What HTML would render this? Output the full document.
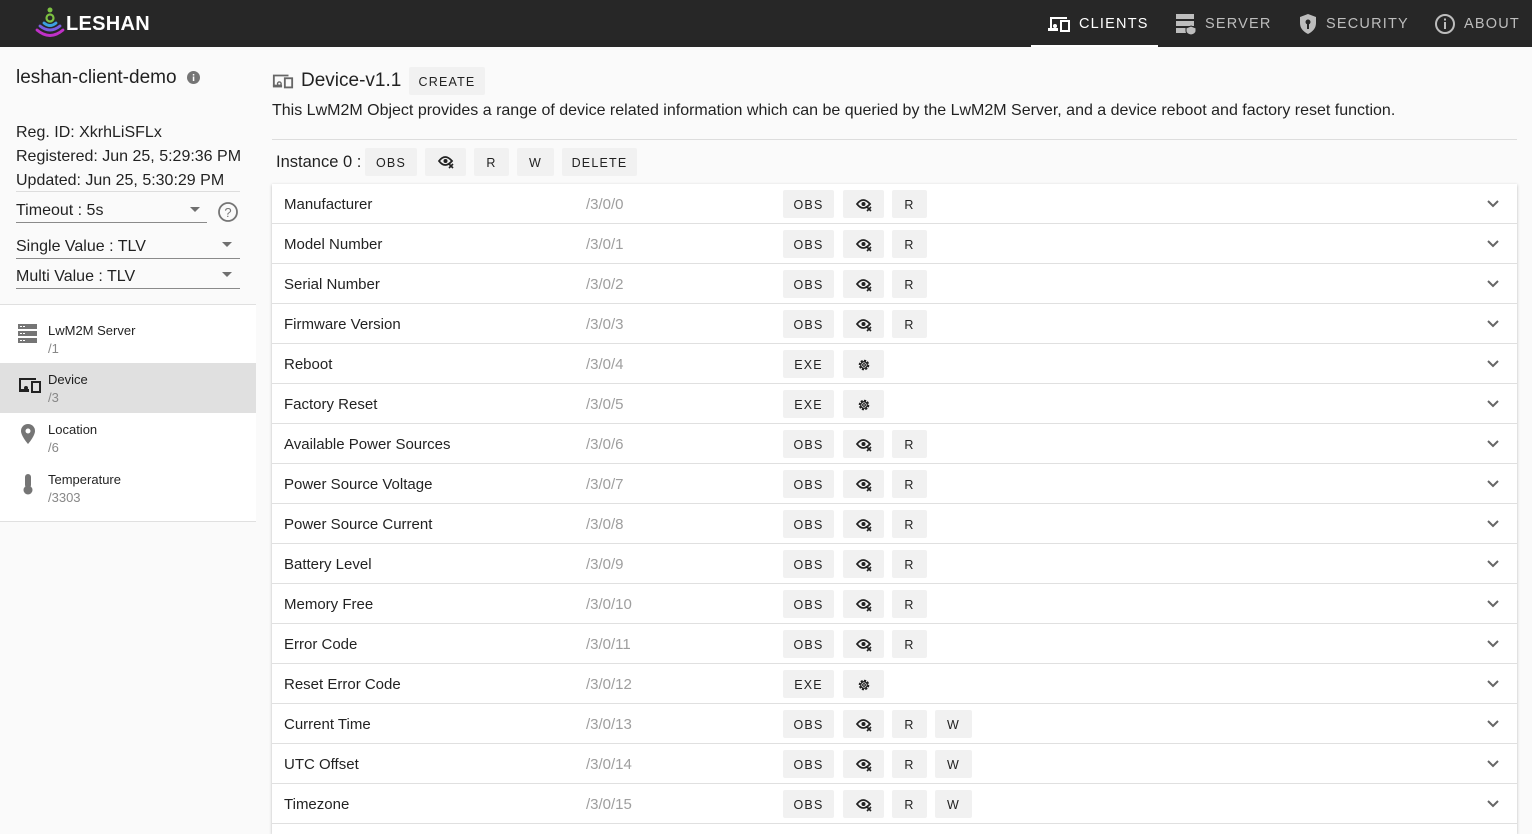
<!DOCTYPE html>
<html><head><meta charset="utf-8"><style>
*{box-sizing:border-box;margin:0;padding:0}
body{width:1532px;height:825px;overflow:hidden;background:#fafafa;font-family:"Liberation Sans",Roboto,sans-serif;color:rgba(0,0,0,.87);position:relative}
.top{position:absolute;left:0;top:0;width:1532px;height:47px;background:#272727}
.logo{position:absolute;left:35px;top:7px}
.logot{position:absolute;left:66px;top:13px;color:#fff;font-weight:bold;font-size:20px;letter-spacing:0.3px}
.nav{position:absolute;top:0;height:47px;display:flex;align-items:center;color:#bdbdbd;font-size:14.5px;letter-spacing:1.2px}
.nav svg{margin-right:8px}
.nav.act{color:#fff;border-bottom:2px solid #fff}
.abs{position:absolute;white-space:nowrap}
.sel{position:absolute;left:16px;border-bottom:1px solid #8a8a8a;font-size:16px;height:24px;padding-top:3px}
.tri{position:absolute;width:0;height:0;border-left:5px solid transparent;border-right:5px solid transparent;border-top:5px solid #6f6f6f}
.list{position:absolute;left:0;top:304px;width:256px;height:218px;background:#fff;border-top:1px solid #e0e0e0;border-bottom:1px solid #e0e0e0}
.li{position:absolute;left:0;width:256px;height:50px}
.li .a{position:absolute;left:48px;top:9px;font-size:13px}
.li .b{position:absolute;left:48px;top:27px;font-size:13px;color:#888}
.li svg{position:absolute;left:18px;top:10px}
.btn{position:absolute;background:#f1f1f1;border-radius:2px;font-size:12.5px;letter-spacing:1.2px;display:flex;align-items:center;justify-content:center;color:#222}
.card{position:absolute;left:272px;top:184px;width:1245px;height:650px;background:#fff;box-shadow:0 1px 3px rgba(0,0,0,.25)}
.row{position:absolute;left:0;width:1245px;height:40px;border-bottom:1px solid #e0e0e0}
.row .n{position:absolute;left:12px;top:12px;font-size:15px}
.row .p{position:absolute;left:314px;top:12px;font-size:15px;color:#9e9e9e}
.row .btn{top:6px;height:28px;padding-top:1px}
.b1{left:511px;width:51px}.b2{left:571px;width:41px}.b3{left:620px;width:35px}.b4{left:663px;width:37px}
.row .chev{position:absolute;left:1215px;top:16px}
</style></head><body>
<div class="top">
<svg class="logo" width="30" height="32" viewBox="0 0 30 32"><circle cx="15" cy="3" r="2.5" fill="#7dc142"/><circle cx="15" cy="11" r="3.5" fill="none" stroke="#7dc142" stroke-width="2.2"/><path d="M9 16q6 5 12 0" fill="none" stroke="#3ca0e0" stroke-width="2.8" stroke-linecap="round"/><path d="M5 19q10 8 20 0" fill="none" stroke="#7a5ce0" stroke-width="2.8" stroke-linecap="round"/><path d="M2 23q13 11 26 0" fill="none" stroke="#c030c8" stroke-width="2.8" stroke-linecap="round"/></svg>
<div class="logot">LESHAN</div>
<div class="nav act" style="left:1031px;width:127px;padding-left:16px;padding-top:2px"><svg width="24" height="18" viewBox="0 0 24 18"><path d="M3 2h17v2H5v11H3z" fill="#fff"/><rect x="1" y="13" width="10" height="3" fill="#fff"/><circle cx="8" cy="11" r="2" fill="#fff"/><rect x="14" y="6" width="8" height="10" fill="none" stroke="#fff" stroke-width="2"/></svg>CLIENTS</div>
<div class="nav" style="left:1175px"><svg width="22" height="22" viewBox="0 0 22 22"><rect x="1" y="1" width="18" height="5" fill="#bdbdbd"/><rect x="1" y="8" width="18" height="5" fill="#bdbdbd"/><rect x="1" y="15" width="12" height="5" fill="#bdbdbd"/><path d="M16 13l5 2v3q0 3-5 4q-5-1-5-4v-3z" fill="#bdbdbd" stroke="#272727"/></svg>SERVER</div>
<div class="nav" style="left:1298px"><svg width="20" height="22" viewBox="0 0 20 22"><path d="M10 1l8 3v6q0 7-8 11q-8-4-8-11V4z" fill="#bdbdbd"/><circle cx="10" cy="9" r="2.5" fill="#272727"/><rect x="9" y="10" width="2" height="6" fill="#272727"/></svg>SECURITY</div>
<div class="nav" style="left:1434px"><svg width="22" height="22" viewBox="0 0 22 22"><circle cx="11" cy="11" r="9" fill="none" stroke="#bdbdbd" stroke-width="2"/><rect x="10" y="9" width="2" height="7" fill="#bdbdbd"/><rect x="10" y="5.5" width="2" height="2" fill="#bdbdbd"/></svg>ABOUT</div>
</div>

<div class="abs" style="left:16px;top:67px;font-size:19px">leshan-client-demo</div>
<svg class="abs" style="left:187px;top:71px" width="13" height="13" viewBox="0 0 13 13"><circle cx="6.5" cy="6.5" r="6.5" fill="#757575"/><rect x="5.8" y="5.5" width="1.5" height="4.5" fill="#fff"/><rect x="5.8" y="3" width="1.5" height="1.5" fill="#fff"/></svg>
<div class="abs" style="left:16px;top:121px;font-size:16px;line-height:24px">Reg. ID: XkrhLiSFLx<br>Registered: Jun 25, 5:29:36 PM<br>Updated: Jun 25, 5:30:29 PM</div>
<div class="abs" style="left:16px;top:191px;width:224px;border-top:1px solid #ddd"></div>
<div class="sel" style="top:199px;width:191px">Timeout : 5s<div class="tri" style="left:174px;top:8px"></div></div>
<svg class="abs" style="left:217px;top:201px" width="22" height="22" viewBox="0 0 22 22"><circle cx="11" cy="11" r="9" fill="none" stroke="#757575" stroke-width="1.8"/><text x="11" y="16" font-size="13" text-anchor="middle" fill="#757575" font-family="Liberation Sans">?</text></svg>
<div class="sel" style="top:235px;width:224px">Single Value : TLV<div class="tri" style="left:206px;top:7px"></div></div>
<div class="sel" style="top:265px;width:224px">Multi Value : TLV<div class="tri" style="left:206px;top:7px"></div></div>

<div class="list">
<div class="li" style="top:9px"><svg width="20" height="22" viewBox="0 0 20 22"><rect x="0" y="0" width="19" height="5" fill="#757575"/><rect x="0" y="7" width="19" height="5" fill="#757575"/><rect x="0" y="14" width="19" height="5" fill="#757575"/><rect x="2" y="2" width="2" height="1" fill="#fff"/><rect x="5" y="2" width="2" height="1" fill="#fff"/><rect x="2" y="9" width="2" height="1" fill="#fff"/><rect x="5" y="9" width="2" height="1" fill="#fff"/><rect x="2" y="16" width="2" height="1" fill="#fff"/><rect x="5" y="16" width="2" height="1" fill="#fff"/></svg><div class="a">LwM2M Server</div><div class="b">/1</div></div>
<div class="li" style="top:58px;background:#e0e0e0"><svg width="24" height="18" viewBox="0 0 24 18" style="top:13px"><path d="M1 2h17v2H3v9H1z" fill="#222"/><rect x="1" y="13" width="10" height="3" fill="#222"/><circle cx="8" cy="12" r="2" fill="#222"/><rect x="14" y="6" width="8" height="10" fill="none" stroke="#222" stroke-width="2"/></svg><div class="a">Device</div><div class="b">/3</div></div>
<div class="li" style="top:108px"><svg width="20" height="22" viewBox="0 0 20 22"><path d="M10 1a7 7 0 0 0-7 7c0 5 7 13 7 13s7-8 7-13a7 7 0 0 0-7-7z" fill="#757575"/><circle cx="10" cy="8" r="2.5" fill="#fff"/></svg><div class="a">Location</div><div class="b">/6</div></div>
<div class="li" style="top:158px"><svg width="20" height="22" viewBox="0 0 20 22"><rect x="7" y="1" width="6" height="14" rx="3" fill="#757575"/><circle cx="10" cy="17" r="4.5" fill="#757575"/></svg><div class="a">Temperature</div><div class="b">/3303</div></div>
</div>

<svg class="abs" style="left:272px;top:72px" width="22" height="18" viewBox="0 0 24 18"><path d="M1 2h17v2H3v11H1z" fill="#666"/><rect x="1" y="13" width="10" height="3" fill="#666"/><circle cx="8" cy="12" r="2" fill="none" stroke="#666" stroke-width="1.5"/><rect x="14" y="6" width="8" height="10" fill="none" stroke="#666" stroke-width="2"/></svg>
<div class="abs" style="left:301px;top:70px;font-size:19px;font-weight:500">Device-v1.1</div>
<div class="btn" style="left:409px;top:67px;width:76px;height:28px;padding-top:2px">CREATE</div>
<div class="abs" style="left:272px;top:102px;font-size:16px">This LwM2M Object provides a range of device related information which can be queried by the LwM2M Server, and a device reboot and factory reset function.</div>
<div class="abs" style="left:272px;top:139px;width:1245px;border-top:1px solid #ddd"></div>
<div class="abs" style="left:276px;top:153px;font-size:16.5px">Instance 0 :</div>
<div class="btn" style="left:365px;top:148px;width:52px;height:28px;padding-top:1px">OBS</div>
<div class="btn" style="left:425px;top:148px;width:41px;height:28px"><svg width="16" height="14" viewBox="0 0 16 14"><path d="M1 6q6-8 13 0q-7 8-13 0z" fill="none" stroke="#222" stroke-width="1.8"/><circle cx="7.5" cy="6" r="2" fill="#222"/><path d="M11 9l4 4M15 9l-4 4" stroke="#222" stroke-width="1.6"/></svg></div>
<div class="btn" style="left:474px;top:148px;width:35px;height:28px;padding-top:1px">R</div>
<div class="btn" style="left:517px;top:148px;width:37px;height:28px;padding-top:1px">W</div>
<div class="btn" style="left:562px;top:148px;width:75px;height:28px;padding-top:1px">DELETE</div>

<div class="card">
<div class="row" style="top:0"><div class="n">Manufacturer</div><div class="p">/3/0/0</div><div class="btn b1">OBS</div><div class="btn b2"><svg width="16" height="14" viewBox="0 0 16 14"><path d="M1 6q6-8 13 0q-7 8-13 0z" fill="none" stroke="#222" stroke-width="1.8"/><circle cx="7.5" cy="6" r="2" fill="#222"/><path d="M11 9l4 4M15 9l-4 4" stroke="#222" stroke-width="1.6"/></svg></div><div class="btn b3">R</div><svg class="chev" width="12" height="8" viewBox="0 0 12 8"><path d="M1 1l5 5 5-5" fill="none" stroke="#666" stroke-width="2"/></svg></div>
<div class="row" style="top:40px"><div class="n">Model Number</div><div class="p">/3/0/1</div><div class="btn b1">OBS</div><div class="btn b2"><svg width="16" height="14" viewBox="0 0 16 14"><path d="M1 6q6-8 13 0q-7 8-13 0z" fill="none" stroke="#222" stroke-width="1.8"/><circle cx="7.5" cy="6" r="2" fill="#222"/><path d="M11 9l4 4M15 9l-4 4" stroke="#222" stroke-width="1.6"/></svg></div><div class="btn b3">R</div><svg class="chev" width="12" height="8" viewBox="0 0 12 8"><path d="M1 1l5 5 5-5" fill="none" stroke="#666" stroke-width="2"/></svg></div>
<div class="row" style="top:80px"><div class="n">Serial Number</div><div class="p">/3/0/2</div><div class="btn b1">OBS</div><div class="btn b2"><svg width="16" height="14" viewBox="0 0 16 14"><path d="M1 6q6-8 13 0q-7 8-13 0z" fill="none" stroke="#222" stroke-width="1.8"/><circle cx="7.5" cy="6" r="2" fill="#222"/><path d="M11 9l4 4M15 9l-4 4" stroke="#222" stroke-width="1.6"/></svg></div><div class="btn b3">R</div><svg class="chev" width="12" height="8" viewBox="0 0 12 8"><path d="M1 1l5 5 5-5" fill="none" stroke="#666" stroke-width="2"/></svg></div>
<div class="row" style="top:120px"><div class="n">Firmware Version</div><div class="p">/3/0/3</div><div class="btn b1">OBS</div><div class="btn b2"><svg width="16" height="14" viewBox="0 0 16 14"><path d="M1 6q6-8 13 0q-7 8-13 0z" fill="none" stroke="#222" stroke-width="1.8"/><circle cx="7.5" cy="6" r="2" fill="#222"/><path d="M11 9l4 4M15 9l-4 4" stroke="#222" stroke-width="1.6"/></svg></div><div class="btn b3">R</div><svg class="chev" width="12" height="8" viewBox="0 0 12 8"><path d="M1 1l5 5 5-5" fill="none" stroke="#666" stroke-width="2"/></svg></div>
<div class="row" style="top:160px"><div class="n">Reboot</div><div class="p">/3/0/4</div><div class="btn b1">EXE</div><div class="btn b2"><svg width="14" height="14" viewBox="0 0 14 14"><circle cx="7" cy="7" r="4.5" fill="none" stroke="#222" stroke-width="1.6" stroke-dasharray="2.2 1.3"/><circle cx="7" cy="7" r="3.3" fill="none" stroke="#222" stroke-width="1.3"/><circle cx="7" cy="7" r="1.3" fill="none" stroke="#222" stroke-width="1.2"/></svg></div><svg class="chev" width="12" height="8" viewBox="0 0 12 8"><path d="M1 1l5 5 5-5" fill="none" stroke="#666" stroke-width="2"/></svg></div>
<div class="row" style="top:200px"><div class="n">Factory Reset</div><div class="p">/3/0/5</div><div class="btn b1">EXE</div><div class="btn b2"><svg width="14" height="14" viewBox="0 0 14 14"><circle cx="7" cy="7" r="4.5" fill="none" stroke="#222" stroke-width="1.6" stroke-dasharray="2.2 1.3"/><circle cx="7" cy="7" r="3.3" fill="none" stroke="#222" stroke-width="1.3"/><circle cx="7" cy="7" r="1.3" fill="none" stroke="#222" stroke-width="1.2"/></svg></div><svg class="chev" width="12" height="8" viewBox="0 0 12 8"><path d="M1 1l5 5 5-5" fill="none" stroke="#666" stroke-width="2"/></svg></div>
<div class="row" style="top:240px"><div class="n">Available Power Sources</div><div class="p">/3/0/6</div><div class="btn b1">OBS</div><div class="btn b2"><svg width="16" height="14" viewBox="0 0 16 14"><path d="M1 6q6-8 13 0q-7 8-13 0z" fill="none" stroke="#222" stroke-width="1.8"/><circle cx="7.5" cy="6" r="2" fill="#222"/><path d="M11 9l4 4M15 9l-4 4" stroke="#222" stroke-width="1.6"/></svg></div><div class="btn b3">R</div><svg class="chev" width="12" height="8" viewBox="0 0 12 8"><path d="M1 1l5 5 5-5" fill="none" stroke="#666" stroke-width="2"/></svg></div>
<div class="row" style="top:280px"><div class="n">Power Source Voltage</div><div class="p">/3/0/7</div><div class="btn b1">OBS</div><div class="btn b2"><svg width="16" height="14" viewBox="0 0 16 14"><path d="M1 6q6-8 13 0q-7 8-13 0z" fill="none" stroke="#222" stroke-width="1.8"/><circle cx="7.5" cy="6" r="2" fill="#222"/><path d="M11 9l4 4M15 9l-4 4" stroke="#222" stroke-width="1.6"/></svg></div><div class="btn b3">R</div><svg class="chev" width="12" height="8" viewBox="0 0 12 8"><path d="M1 1l5 5 5-5" fill="none" stroke="#666" stroke-width="2"/></svg></div>
<div class="row" style="top:320px"><div class="n">Power Source Current</div><div class="p">/3/0/8</div><div class="btn b1">OBS</div><div class="btn b2"><svg width="16" height="14" viewBox="0 0 16 14"><path d="M1 6q6-8 13 0q-7 8-13 0z" fill="none" stroke="#222" stroke-width="1.8"/><circle cx="7.5" cy="6" r="2" fill="#222"/><path d="M11 9l4 4M15 9l-4 4" stroke="#222" stroke-width="1.6"/></svg></div><div class="btn b3">R</div><svg class="chev" width="12" height="8" viewBox="0 0 12 8"><path d="M1 1l5 5 5-5" fill="none" stroke="#666" stroke-width="2"/></svg></div>
<div class="row" style="top:360px"><div class="n">Battery Level</div><div class="p">/3/0/9</div><div class="btn b1">OBS</div><div class="btn b2"><svg width="16" height="14" viewBox="0 0 16 14"><path d="M1 6q6-8 13 0q-7 8-13 0z" fill="none" stroke="#222" stroke-width="1.8"/><circle cx="7.5" cy="6" r="2" fill="#222"/><path d="M11 9l4 4M15 9l-4 4" stroke="#222" stroke-width="1.6"/></svg></div><div class="btn b3">R</div><svg class="chev" width="12" height="8" viewBox="0 0 12 8"><path d="M1 1l5 5 5-5" fill="none" stroke="#666" stroke-width="2"/></svg></div>
<div class="row" style="top:400px"><div class="n">Memory Free</div><div class="p">/3/0/10</div><div class="btn b1">OBS</div><div class="btn b2"><svg width="16" height="14" viewBox="0 0 16 14"><path d="M1 6q6-8 13 0q-7 8-13 0z" fill="none" stroke="#222" stroke-width="1.8"/><circle cx="7.5" cy="6" r="2" fill="#222"/><path d="M11 9l4 4M15 9l-4 4" stroke="#222" stroke-width="1.6"/></svg></div><div class="btn b3">R</div><svg class="chev" width="12" height="8" viewBox="0 0 12 8"><path d="M1 1l5 5 5-5" fill="none" stroke="#666" stroke-width="2"/></svg></div>
<div class="row" style="top:440px"><div class="n">Error Code</div><div class="p">/3/0/11</div><div class="btn b1">OBS</div><div class="btn b2"><svg width="16" height="14" viewBox="0 0 16 14"><path d="M1 6q6-8 13 0q-7 8-13 0z" fill="none" stroke="#222" stroke-width="1.8"/><circle cx="7.5" cy="6" r="2" fill="#222"/><path d="M11 9l4 4M15 9l-4 4" stroke="#222" stroke-width="1.6"/></svg></div><div class="btn b3">R</div><svg class="chev" width="12" height="8" viewBox="0 0 12 8"><path d="M1 1l5 5 5-5" fill="none" stroke="#666" stroke-width="2"/></svg></div>
<div class="row" style="top:480px"><div class="n">Reset Error Code</div><div class="p">/3/0/12</div><div class="btn b1">EXE</div><div class="btn b2"><svg width="14" height="14" viewBox="0 0 14 14"><circle cx="7" cy="7" r="4.5" fill="none" stroke="#222" stroke-width="1.6" stroke-dasharray="2.2 1.3"/><circle cx="7" cy="7" r="3.3" fill="none" stroke="#222" stroke-width="1.3"/><circle cx="7" cy="7" r="1.3" fill="none" stroke="#222" stroke-width="1.2"/></svg></div><svg class="chev" width="12" height="8" viewBox="0 0 12 8"><path d="M1 1l5 5 5-5" fill="none" stroke="#666" stroke-width="2"/></svg></div>
<div class="row" style="top:520px"><div class="n">Current Time</div><div class="p">/3/0/13</div><div class="btn b1">OBS</div><div class="btn b2"><svg width="16" height="14" viewBox="0 0 16 14"><path d="M1 6q6-8 13 0q-7 8-13 0z" fill="none" stroke="#222" stroke-width="1.8"/><circle cx="7.5" cy="6" r="2" fill="#222"/><path d="M11 9l4 4M15 9l-4 4" stroke="#222" stroke-width="1.6"/></svg></div><div class="btn b3">R</div><div class="btn b4">W</div><svg class="chev" width="12" height="8" viewBox="0 0 12 8"><path d="M1 1l5 5 5-5" fill="none" stroke="#666" stroke-width="2"/></svg></div>
<div class="row" style="top:560px"><div class="n">UTC Offset</div><div class="p">/3/0/14</div><div class="btn b1">OBS</div><div class="btn b2"><svg width="16" height="14" viewBox="0 0 16 14"><path d="M1 6q6-8 13 0q-7 8-13 0z" fill="none" stroke="#222" stroke-width="1.8"/><circle cx="7.5" cy="6" r="2" fill="#222"/><path d="M11 9l4 4M15 9l-4 4" stroke="#222" stroke-width="1.6"/></svg></div><div class="btn b3">R</div><div class="btn b4">W</div><svg class="chev" width="12" height="8" viewBox="0 0 12 8"><path d="M1 1l5 5 5-5" fill="none" stroke="#666" stroke-width="2"/></svg></div>
<div class="row" style="top:600px"><div class="n">Timezone</div><div class="p">/3/0/15</div><div class="btn b1">OBS</div><div class="btn b2"><svg width="16" height="14" viewBox="0 0 16 14"><path d="M1 6q6-8 13 0q-7 8-13 0z" fill="none" stroke="#222" stroke-width="1.8"/><circle cx="7.5" cy="6" r="2" fill="#222"/><path d="M11 9l4 4M15 9l-4 4" stroke="#222" stroke-width="1.6"/></svg></div><div class="btn b3">R</div><div class="btn b4">W</div><svg class="chev" width="12" height="8" viewBox="0 0 12 8"><path d="M1 1l5 5 5-5" fill="none" stroke="#666" stroke-width="2"/></svg></div>
</div>
</body></html>
